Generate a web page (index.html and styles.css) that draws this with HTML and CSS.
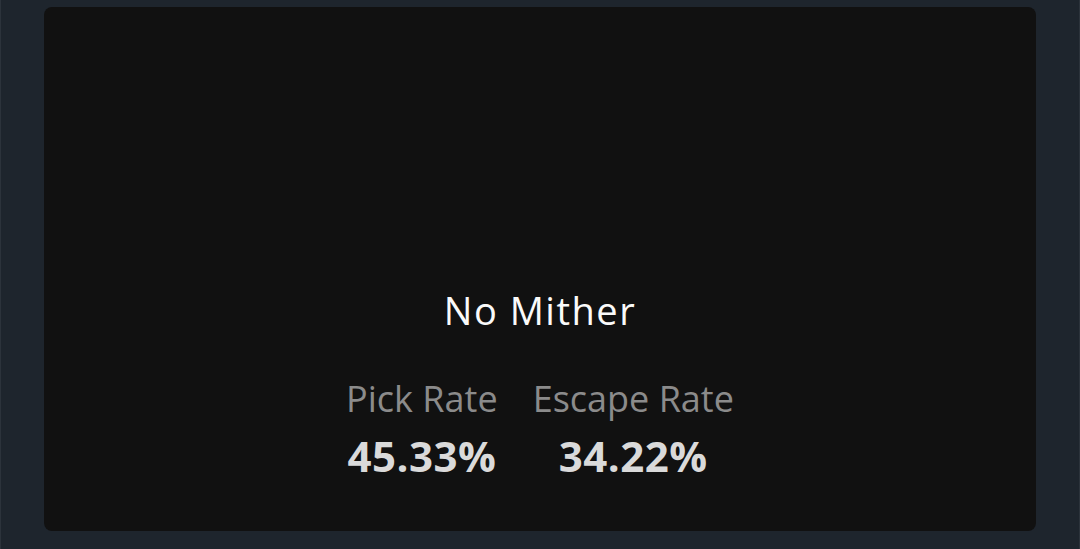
FILE: index.html
```html
<!DOCTYPE html>
<html lang="en">
<head>
	<meta charset="UTF-8">
	<title>No Mither</title>
	<link rel="stylesheet" href="styles.css">
</head>
<body>
	<div class="page">
		<div class="card">
			<div class="art"></div>
			<h2 class="name">No Mither</h2>
			<div class="stats">
				<div class="stat">
					<span class="label">Pick Rate</span>
					<span class="value">45.33%</span>
				</div>
				<div class="stat">
					<span class="label">Escape Rate</span>
					<span class="value">34.22%</span>
				</div>
			</div>
		</div>
	</div>
</body>
</html>
```

FILE: styles.css
```css
html,body{
	margin: 0;
	height: 100%;
}
body{
	background-color: #1e252d;
	font-family: "Open Sans", "Noto Sans", sans-serif;
}
.page{
	height: 100%;
	box-sizing: border-box;
	border-left: 1px solid #2c333b;
	border-right: 1px solid #2c333b;
	padding: 7px 43px 18px;
	display: flex;
}
.card{
	flex: 1;
	background-color: #111;
	border-radius: 8px;
	display: flex;
	flex-direction: column;
	align-items: center;
}
.art{
	flex: 1;
}
.name{
	margin: 0;
	font-size: 38px;
	font-weight: 500;
	letter-spacing: 1.5px;
	line-height: 44px;
	color: #fafafa;
}
.stats{
	display: flex;
	gap: 35px;
	margin-top: 45px;
	margin-bottom: 50px;
}
.stat{
	display: flex;
	flex-direction: column;
	align-items: center;
}
.label{
	font-size: 36px;
	line-height: 44px;
	color: #8b8b8b;
}
.value{
	margin-top: 10px;
	font-size: 42px;
	font-weight: 700;
	letter-spacing: 0.5px;
	line-height: 50px;
	color: #dadada;
}
```
